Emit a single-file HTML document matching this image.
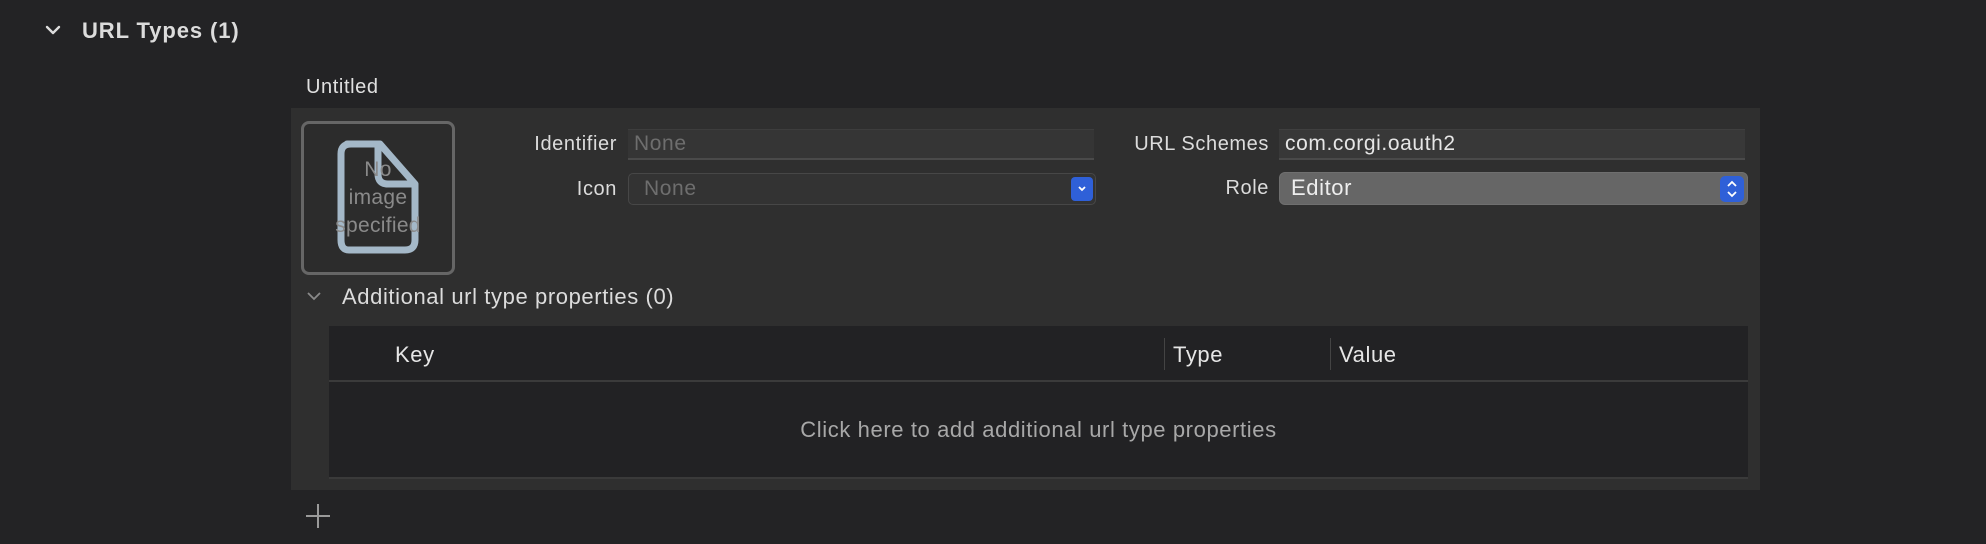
<!DOCTYPE html>
<html><head><meta charset="utf-8"><style>
*{margin:0;padding:0;box-sizing:border-box}
body{width:1986px;height:544px;background:#232325;font-family:"Liberation Sans",sans-serif;color:#dcdcdc;position:relative;overflow:hidden;letter-spacing:0.6px}
.a{position:absolute;white-space:nowrap}
.lbl{font-size:20px;color:#dcdcdc;text-align:right}
</style></head><body>
<svg class="a" style="left:44px;top:24px" width="18" height="14"><path d="M3 3 L9 9 L15 3" stroke="#dcdcdc" stroke-width="2.4" fill="none" stroke-linecap="round" stroke-linejoin="round"/></svg>
<div class="a" style="left:82px;top:18px;font-size:22px;font-weight:bold;color:#dcdcdc;letter-spacing:0.9px">URL Types (1)</div>
<div class="a" style="left:306px;top:76px;font-size:20px;color:#e0e0e0">Untitled</div>
<div class="a" style="left:291px;top:108px;width:1469px;height:382px;background:#2f2f2f"></div>
<div class="a" style="left:301px;top:121px;width:154px;height:154px;border:3px solid #666;border-radius:8px;background:#2c2c2c"></div>
<svg class="a" style="left:335px;top:140px" width="86" height="116"><path d="M12 4 H45 L80 44 V100 Q80 110 70 110 H14 Q6 110 6 100 V14 Q6 4 16 4 Z M43 4 V34 Q43 44 53 44 H80" stroke="#a4b8c8" stroke-width="7" fill="none" stroke-linejoin="round"/></svg>
<div class="a" style="left:296px;top:156px;width:164px;text-align:center;font-size:21px;line-height:28px;color:#8a8a8a;white-space:normal;letter-spacing:0.3px">No<br>image<br>specified</div>
<div class="a lbl" style="left:480px;width:137px;top:133px">Identifier</div>
<div class="a" style="left:628px;top:129px;width:466px;height:31px;background:#353535;border-bottom:2px solid #4a4a4a;border-top:1px solid #3d3d3d;font-size:21px;color:#6e6e6e;padding:2px 6px">None</div>
<div class="a lbl" style="left:480px;width:137px;top:178px">Icon</div>
<div class="a" style="left:628px;top:173px;width:468px;height:32px;background:#333;border:1px solid #474747;border-radius:5px;font-size:21px;color:#6e6e6e;padding:3px 15px">None</div>
<div class="a" style="left:1071px;top:177px;width:22px;height:24px;background:#2f60d8;border-radius:4px"></div>
<svg class="a" style="left:1076px;top:183px" width="12" height="12"><path d="M3 4 L6 7 L9 4" stroke="#fff" stroke-width="1.8" fill="none"/></svg>
<div class="a lbl" style="left:1080px;width:189px;top:133px">URL Schemes</div>
<div class="a" style="left:1279px;top:129px;width:466px;height:31px;background:#383838;border-bottom:2px solid #4a4a4a;border-top:1px solid #3f3f3f;font-size:21px;color:#e6e6e6;padding:2px 6px">com.corgi.oauth2</div>
<div class="a lbl" style="left:1100px;width:169px;top:177px">Role</div>
<div class="a" style="left:1279px;top:172px;width:469px;height:33px;background:#666;border:1px solid #6f6f6f;border-radius:6px;font-size:22px;color:#eee;padding:2px 11px">Editor</div>
<div class="a" style="left:1720px;top:176px;width:24px;height:26px;background:#2f60d8;border-radius:5px"></div>
<svg class="a" style="left:1724px;top:178px" width="16" height="22"><path d="M4 8 L8 4 L12 8 M4 14 L8 18 L12 14" stroke="#fff" stroke-width="1.8" fill="none"/></svg>
<svg class="a" style="left:305px;top:290px" width="18" height="12"><path d="M3 3 L9 9 L15 3" stroke="#8a8a8a" stroke-width="1.8" fill="none"/></svg>
<div class="a" style="left:342px;top:284px;font-size:22px;color:#dcdcdc">Additional url type properties (0)</div>
<div class="a" style="left:329px;top:326px;width:1419px;height:153px;background:#222224;border-bottom:2px solid #3a3a3a"></div>
<div class="a" style="left:329px;top:380px;width:1419px;height:2px;background:#3b3b3b"></div>
<div class="a" style="left:1164px;top:338px;width:1px;height:32px;background:#444"></div>
<div class="a" style="left:1330px;top:338px;width:1px;height:32px;background:#444"></div>
<div class="a" style="left:395px;top:342px;font-size:22px;color:#e6e6e6">Key</div>
<div class="a" style="left:1173px;top:342px;font-size:22px;color:#e6e6e6">Type</div>
<div class="a" style="left:1339px;top:342px;font-size:22px;color:#e6e6e6">Value</div>
<div class="a" style="left:329px;top:417px;width:1419px;text-align:center;font-size:22px;color:#a8a8a8">Click here to add additional url type properties</div>
<svg class="a" style="left:304px;top:502px" width="28" height="28"><path d="M14 2 V26 M2 14 H26" stroke="#9a9a9a" stroke-width="2"/></svg>
</body></html>
